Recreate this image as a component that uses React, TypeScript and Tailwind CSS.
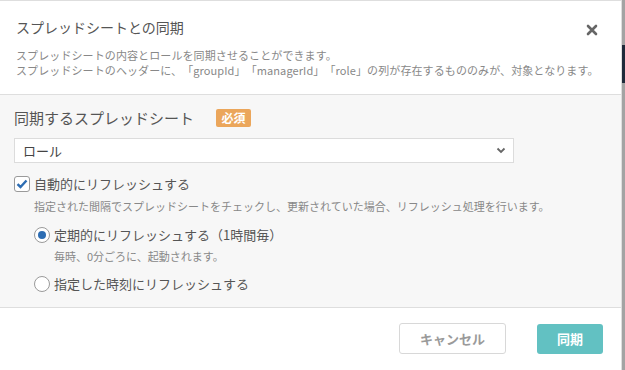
const jp = "font-['Hiragino_Sans','Noto_Sans_CJK_JP',sans-serif] [text-spacing-trim:space-all]";

function CloseIcon() {
  return (
    <svg width="12" height="12" viewBox="0 0 12 12">
      <path d="M2 2 L10 10 M10 2 L2 10" stroke="#666" strokeWidth="2.6" strokeLinecap="round" />
    </svg>
  );
}

function Chevron() {
  return (
    <svg width="10" height="7" viewBox="0 0 10 7">
      <path d="M1.5 1.5 L5 5 L8.5 1.5" fill="none" stroke="#666" strokeWidth="1.8" />
    </svg>
  );
}

function Checkbox() {
  return (
    <span className="flex h-4 w-4 items-center justify-center rounded-[3px] border border-[#9a9a9a] bg-white">
      <svg width="12" height="10" viewBox="0 0 12 10">
        <path d="M1.5 5.2 L4.5 8 L10.5 1.5" fill="none" stroke="#2d6db3" strokeWidth="2.4" />
      </svg>
    </span>
  );
}

function Radio({ checked }: { checked: boolean }) {
  return (
    <span className="flex h-4 w-4 items-center justify-center rounded-full border border-[#9a9a9a] bg-white">
      {checked && <span className="h-[8px] w-[8px] rounded-full bg-[#2d6db3]"></span>}
    </span>
  );
}

export default function App() {
  return (
    <div className={`flex h-[370px] w-[625px] bg-[#a3a3a3] ${jp}`}>
      <div className="flex w-[622px] flex-col border-t border-r border-[#dedede] bg-white">
        <div className="relative px-4 pt-[16px] pb-[16px]">
          <h1 className="text-[14px] leading-[20px] text-[#555]">スプレッドシートとの同期</h1>
          <button className="absolute top-[23px] right-[23px]">
            <CloseIcon />
          </button>
          <div className="mt-[11px] text-[11px] leading-[15px] tracking-[0.1px] text-[#888]">
            <p>スプレッドシートの内容とロールを同期させることができます。</p>
            <p>スプレッドシートのヘッダーに、「groupId」「managerId」「role」の列が存在するもののみが、対象となります。</p>
          </div>
        </div>

        <div className="flex flex-col border-y border-[#dedede] bg-[#f7f7f7] pt-[13px] pb-[15px] pl-[14px]">
          <div className="flex items-center">
            <span className="text-[15px] leading-[20px] text-[#555]">同期するスプレッドシート</span>
            <span className="ml-[22px] flex h-[18px] w-[35px] items-center justify-center rounded-[2px] bg-[#eba65b] text-[12px] font-bold text-white">
              必須
            </span>
          </div>
          <div className="mt-[10px] flex h-[25px] w-[500px] items-center justify-between border border-[#dcdcdc] bg-white pr-[7px] pl-[8px]">
            <span className="text-[13px] text-[#444]">ロール</span>
            <Chevron />
          </div>
          <div className="mt-[13px] flex items-center gap-[4px]">
            <Checkbox />
            <span className="text-[13px] leading-[16px] text-[#555]">自動的にリフレッシュする</span>
          </div>
          <p className="mt-[6px] ml-[20px] text-[11px] leading-[16px] text-[#888]">
            指定された間隔でスプレッドシートをチェックし、更新されていた場合、リフレッシュ処理を行います。
          </p>
          <div className="mt-[13px] ml-[20px] flex items-center gap-[4px]">
            <Radio checked />
            <span className="text-[13px] leading-[16px] text-[#555]">定期的にリフレッシュする（1時間毎）</span>
          </div>
          <p className="mt-[5px] ml-[40px] text-[11px] leading-[16px] text-[#888]">毎時、0分ごろに、起動されます。</p>
          <div className="mt-[12px] ml-[20px] flex items-center gap-[4px]">
            <Radio checked={false} />
            <span className="text-[13px] leading-[16px] text-[#555]">指定した時刻にリフレッシュする</span>
          </div>
        </div>

        <div className="flex flex-1 items-start justify-end gap-[31px] pt-[15px] pr-[18px]">
          <button className="flex h-[31px] w-[107px] items-center justify-center rounded-[3px] border border-[#d8d8d8] bg-white text-[13px] font-bold text-[#9a9a9a]">
            キャンセル
          </button>
          <button className="mt-px flex h-[30px] w-[66px] items-center justify-center rounded-[3px] bg-[#62c1c2] text-[13px] font-bold text-white">
            同期
          </button>
        </div>
      </div>
      <div className="flex-1 pt-[45px]">
        <div className="h-[38px] bg-[#1f2a3a]"></div>
      </div>
    </div>
  );
}
